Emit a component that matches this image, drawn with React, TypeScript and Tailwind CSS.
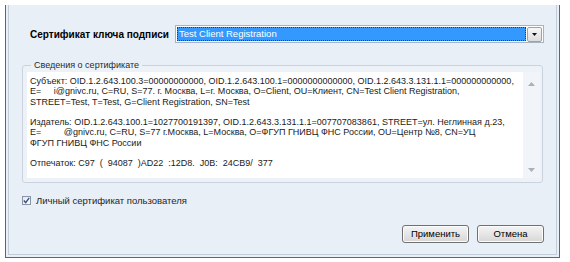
import { useState } from 'react';

const subjectLines = [
  'Субъект: OID.1.2.643.100.3=00000000000, OID.1.2.643.100.1=0000000000000, OID.1.2.643.3.131.1.1=000000000000,',
  'E=\u00a0\u00a0\u00a0\u00a0 i@gnivc.ru, C=RU, S=77. г. Москва, L=г. Москва, O=Client, OU=Клиент, CN=Test Client Registration,',
  'STREET=Test, T=Test, G=Client Registration, SN=Test',
  '',
  'Издатель: OID.1.2.643.100.1=1027700191397, OID.1.2.643.3.131.1.1=007707083861, STREET=ул. Неглинная д.23,',
  'E=\u00a0\u00a0\u00a0\u00a0\u00a0\u00a0\u00a0\u00a0 @gnivc.ru, C=RU, S=77 г.Москва, L=Москва, O=ФГУП ГНИВЦ ФНС России, OU=Центр №8, CN=УЦ',
  'ФГУП ГНИВЦ ФНС России',
  '',
  'Отпечаток: C97 \u00a0( \u00a094087 \u00a0)AD22 \u00a0:12D8. \u00a0J0B: \u00a024CB9/ \u00a0377',
];

const Arrow = ({ up, color }: { up?: boolean; color: string }) => (
  <svg width="7" height="4" viewBox="0 0 7 4">
    <polygon points={up ? '0,4 7,4 3.5,0' : '0,0 7,0 3.5,4'} fill={color} />
  </svg>
);

const WinButton = ({ children }: { children: string }) => (
  <button className="w-[67px] h-[18px] rounded-[3px] border border-[#707070] bg-gradient-to-b from-[#f4f4f4] via-[#e6e6e6] to-[#d6d6d6] text-[9.5px] leading-none text-black shadow-[inset_0_0_0_1px_#fcfcfc]">
    {children}
  </button>
);

const App = () => {
  const [personal, setPersonal] = useState(true);

  return (
    <div className="w-[570px] h-[262px] bg-white pt-[5px] pl-[5px] font-['Liberation_Sans',Arial,sans-serif] text-black">
      {/* рамка окна */}
      <div className="w-[555px] h-[253px] border-x border-b border-[#5d6773] bg-[#e9eff6] px-[2px] pb-[2px]">
        <div className="h-full border-x border-b border-[#c3cdd9] flex flex-col">
          {/* сертификат */}
          <div className="mt-[20px] flex items-center h-[18px]">
            <div className="w-[166px] pl-[21px] text-[10px] font-bold whitespace-nowrap">
              Сертификат ключа подписи
            </div>
            <div className="w-[369px] h-[18px] border border-[#a7b3c1] bg-white flex items-center pl-[1px] pr-[1px]">
              <div className="flex-1 h-[14px] bg-[#3399ff] border border-dotted border-[#1d3f66] flex items-center pl-[1px] text-[9.5px] text-white leading-none">
                Test Client Registration
              </div>
              <div className="w-[15px] h-[15px] ml-[1px] border border-[#9aa3ad] rounded-[2px] bg-gradient-to-b from-[#f7f7f7] to-[#dcdcdc] flex items-center justify-center">
                <svg width="5" height="3" viewBox="0 0 5 3">
                  <polygon points="0,0 5,0 2.5,3" fill="#111" />
                </svg>
              </div>
            </div>
          </div>

          {/* сведения */}
          <fieldset className="ml-[13px] mt-[17px] w-[521px] border border-[#c9d2dd] rounded-[3px] pl-[4px] pr-[2px] pb-[4px] bg-[#edf2f8]">
            <legend className="ml-[4px] px-[3px] text-[9px] leading-[11px] text-[#2a2a2a]">
              Сведения о сертификате
            </legend>
            <div className="flex h-[106px] mt-[1px]">
              <div className="w-[496px] bg-white pt-[4px] pl-[3px] text-[9px] leading-[10px] text-[#1a1a1a] overflow-hidden">
                {subjectLines.map((line, i) => (
                  <div key={i} className="h-[10.25px] whitespace-pre">
                    {line}
                  </div>
                ))}
              </div>
              <div className="w-[17px] bg-[#f1f4f8] flex flex-col items-center justify-between pt-[10px] pb-[6px]">
                <Arrow up color="#a9b0b8" />
                <Arrow color="#a9b0b8" />
              </div>
            </div>
          </fieldset>

          {/* чекбокс */}
          <label className="ml-[13px] mt-[13px] flex items-center gap-[5px] text-[9.5px] leading-none text-[#1e1e1e]">
            <span
              onClick={() => setPersonal(!personal)}
              className="w-[9px] h-[9px] border border-[#8a96a4] bg-gradient-to-br from-[#e3e8ee] to-[#fafbfc] flex items-center justify-center"
            >
              {personal && (
                <svg width="7" height="7" viewBox="0 0 7 7">
                  <path d="M0.8 3.6 L2.7 5.6 L6.2 0.9" stroke="#3b4f8a" strokeWidth="1.4" fill="none" />
                </svg>
              )}
            </span>
            Личный сертификат пользователя
          </label>

          {/* кнопки */}
          <div className="mt-auto mb-[11px] mr-[12px] flex justify-end gap-[8px]">
            <WinButton>Применить</WinButton>
            <WinButton>Отмена</WinButton>
          </div>
        </div>
      </div>
    </div>
  );
};

export default App;
